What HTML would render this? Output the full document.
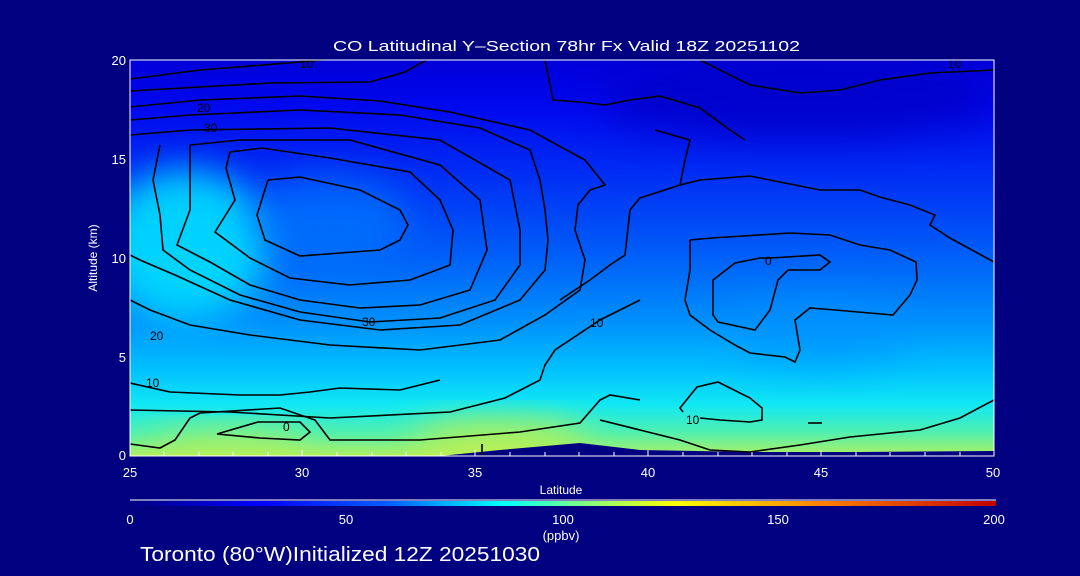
<!DOCTYPE html>
<html><head><style>
html,body{margin:0;padding:0;background:#000080;}
svg{display:block}
text{font-family:"Liberation Sans","DejaVu Sans",sans-serif;fill:#fff}
</style></head><body>
<svg width="1080" height="576" viewBox="0 0 1080 576" xmlns="http://www.w3.org/2000/svg">
<defs>
<linearGradient id="bg" x1="0" y1="0" x2="0" y2="1">
<stop offset="0" stop-color="#0000d8"/>
<stop offset="0.12" stop-color="#0008ee"/>
<stop offset="0.3" stop-color="#0030f4"/>
<stop offset="0.5" stop-color="#0060f8"/>
<stop offset="0.66" stop-color="#0090fc"/>
<stop offset="0.78" stop-color="#00c0ff"/>
<stop offset="0.87" stop-color="#10e8f4"/>
<stop offset="0.94" stop-color="#50f0b0"/>
<stop offset="1" stop-color="#b0f060"/>
</linearGradient>
<linearGradient id="cb" x1="0" y1="0" x2="1" y2="0">
<stop offset="0" stop-color="#000080"/>
<stop offset="0.15" stop-color="#0000ff"/>
<stop offset="0.3" stop-color="#0060ff"/>
<stop offset="0.43" stop-color="#00ffff"/>
<stop offset="0.55" stop-color="#a0ff60"/>
<stop offset="0.63" stop-color="#ffff00"/>
<stop offset="0.8" stop-color="#ff8000"/>
<stop offset="1" stop-color="#c00000"/>
</linearGradient>
<filter id="bl" x="-50%" y="-50%" width="200%" height="200%"><feGaussianBlur stdDeviation="18"/></filter>
<clipPath id="pc"><rect x="130" y="60" width="864" height="396"/></clipPath>
</defs>
<rect x="130" y="60" width="864" height="396" fill="url(#bg)"/>
<g clip-path="url(#pc)">
<ellipse cx="185" cy="245" rx="85" ry="75" fill="#00e0ff" filter="url(#bl)" opacity="0.9"/>
<ellipse cx="330" cy="220" rx="80" ry="45" fill="#0080ff" filter="url(#bl)" opacity="0.6"/>
<ellipse cx="800" cy="100" rx="200" ry="40" fill="#0000c0" filter="url(#bl)" opacity="0.7"/>
<ellipse cx="500" cy="440" rx="90" ry="20" fill="#d0f040" filter="url(#bl)" opacity="0.8"/>
<ellipse cx="230" cy="445" rx="80" ry="15" fill="#c0f050" filter="url(#bl)" opacity="0.7"/>
<ellipse cx="820" cy="330" rx="90" ry="35" fill="#0090ff" filter="url(#bl)" opacity="0.5"/>
<polygon points="440,456 500,450 580,443 640,450 750,452 860,452 994,451 994,456" fill="#000080"/>
<g fill="none" stroke="#000" stroke-width="1.6">
<polyline points="130,79 200,70 300,62 345,58"/>
<polyline points="130,91 270,83 370,82 405,72 430,58"/>
<polyline points="130,107 200,100 300,96 380,101 450,112 530,130 585,160 605,185 590,190 578,205 575,230 585,260 580,290 545,315 500,340 420,350 330,345 250,335 190,325 150,310 130,300"/>
<polyline points="130,120 190,115 300,110 400,115 480,128 530,150 540,180 545,210 548,240 545,270 520,300 460,325 380,330 300,320 230,300 175,275 140,260 130,255"/>
<polyline points="130,135 190,130 330,128 440,140 510,180 520,230 520,265 495,300 440,318 370,322 300,312 240,295 190,270 163,250 160,215 153,180 160,145"/>
<polyline points="190,145 240,140 350,140 440,165 480,200 487,250 470,290 420,305 360,308 300,300 250,285 210,262 177,245 190,210 190,160 190,145"/>
<polyline points="230,152 262,148 330,158 410,172 440,200 453,230 450,265 410,280 350,285 290,278 250,258 215,232 235,200 226,168 230,152"/>
<polyline points="268,180 300,177 360,190 400,210 408,225 400,240 380,250 300,256 265,240 257,215 268,180"/>
<polyline points="545,60 553,100 580,102 605,105 630,100 660,96 700,108 730,130 745,140"/>
<polyline points="700,60 750,85 800,93 840,90 880,80 930,73 994,70"/>
<polyline points="655,130 690,140 685,160 680,185 640,198 630,210 625,255 610,265 590,280 560,300"/>
<polyline points="680,185 700,180 750,176 820,190 860,190 880,197 910,205 935,215 930,225 950,238 994,262"/>
<polyline points="690,240 712,238 790,233 830,235 860,245 890,250 916,262 917,280 910,295 893,315 835,310 810,308 795,320 800,350 795,362 785,357 750,353 735,345 710,330 690,315 685,300 690,270 690,240"/>
<polyline points="735,263 760,258 770,258 820,255 830,262 820,270 788,270 778,280 770,310 755,330 718,322 713,315 713,280 735,263"/>
<polyline points="683,412 680,408 697,387 718,382 750,398 762,408 762,420 750,422 720,420 700,418"/>
<polyline points="130,383 170,392 240,395 280,395 310,392 340,388 400,390 440,380"/>
<polyline points="130,410 230,412 330,418 450,412 505,398 540,380 545,365 555,350 600,320 640,300"/>
<polyline points="130,444 160,448 175,440 190,418 200,413 280,408 315,420 330,440 420,440 520,432 580,423 600,400 610,395 640,400"/>
<polyline points="217,434 258,422 300,422 310,432 300,440 260,438 217,434"/>
<polyline points="600,420 640,430 680,440 710,450 750,452 800,445 850,437 920,430 960,418 994,400"/>
<polyline points="808,423 822,423"/>
<polyline points="482,444 482,456"/>
</g>
<g font-size="12">
<text x="300" y="68" style="fill:#000">10</text>
<text x="197" y="112" style="fill:#000">20</text>
<text x="204" y="132" style="fill:#000">30</text>
<text x="362" y="326" style="fill:#000">30</text>
<text x="150" y="340" style="fill:#000">20</text>
<text x="146" y="387" style="fill:#000">10</text>
<text x="283" y="431" style="fill:#000">0</text>
<text x="765" y="265" style="fill:#000">0</text>
<text x="590" y="327" style="fill:#000">10</text>
<text x="686" y="424" style="fill:#000">10</text>
<text x="948" y="68" style="fill:#000">10</text>
</g>
</g>
<rect x="130" y="60" width="864" height="396" fill="none" stroke="#fff" stroke-width="1"/>
<g stroke="#fff" stroke-width="1">
<line x1="164" y1="456" x2="164" y2="452"/><line x1="199" y1="456" x2="199" y2="452"/><line x1="233" y1="456" x2="233" y2="452"/><line x1="268" y1="456" x2="268" y2="452"/>
<line x1="302" y1="456" x2="302" y2="450"/>
<line x1="337" y1="456" x2="337" y2="452"/><line x1="372" y1="456" x2="372" y2="452"/><line x1="406" y1="456" x2="406" y2="452"/><line x1="441" y1="456" x2="441" y2="452"/>
<line x1="475" y1="456" x2="475" y2="450"/>
<line x1="510" y1="456" x2="510" y2="452"/><line x1="545" y1="456" x2="545" y2="452"/><line x1="579" y1="456" x2="579" y2="452"/><line x1="614" y1="456" x2="614" y2="452"/>
<line x1="648" y1="456" x2="648" y2="450"/>
<line x1="683" y1="456" x2="683" y2="452"/><line x1="718" y1="456" x2="718" y2="452"/><line x1="752" y1="456" x2="752" y2="452"/><line x1="787" y1="456" x2="787" y2="452"/>
<line x1="821" y1="456" x2="821" y2="450"/>
<line x1="856" y1="456" x2="856" y2="452"/><line x1="890" y1="456" x2="890" y2="452"/><line x1="925" y1="456" x2="925" y2="452"/><line x1="960" y1="456" x2="960" y2="452"/>
</g>
<text x="333" y="51" font-size="15" textLength="467" lengthAdjust="spacingAndGlyphs">CO Latitudinal Y–Section 78hr  Fx Valid 18Z 20251102</text>
<g font-size="13" text-anchor="end">
<text x="126" y="65">20</text><text x="126" y="164">15</text><text x="126" y="263">10</text><text x="126" y="362">5</text><text x="126" y="460">0</text>
</g>
<text transform="translate(97,258) rotate(-90)" font-size="12" text-anchor="middle">Altitude (km)</text>
<g font-size="13" text-anchor="middle">
<text x="130" y="477">25</text><text x="302" y="477">30</text><text x="475" y="477">35</text><text x="648" y="477">40</text><text x="821" y="477">45</text><text x="993" y="477">50</text>
</g>
<text x="561" y="494" font-size="12" text-anchor="middle">Latitude</text>
<line x1="130" y1="500" x2="996" y2="500" stroke="#fff" stroke-width="1"/>
<rect x="130" y="501" width="866" height="5" fill="url(#cb)"/>
<g font-size="13" text-anchor="middle">
<text x="130" y="524">0</text><text x="346" y="524">50</text><text x="563" y="524">100</text><text x="778" y="524">150</text><text x="994" y="524">200</text>
</g>
<text x="561" y="540" font-size="13" text-anchor="middle">(ppbv)</text>
<text x="140" y="561" font-size="20" textLength="400" lengthAdjust="spacingAndGlyphs">Toronto (80°W)Initialized 12Z 20251030</text>
</svg>
</body></html>
